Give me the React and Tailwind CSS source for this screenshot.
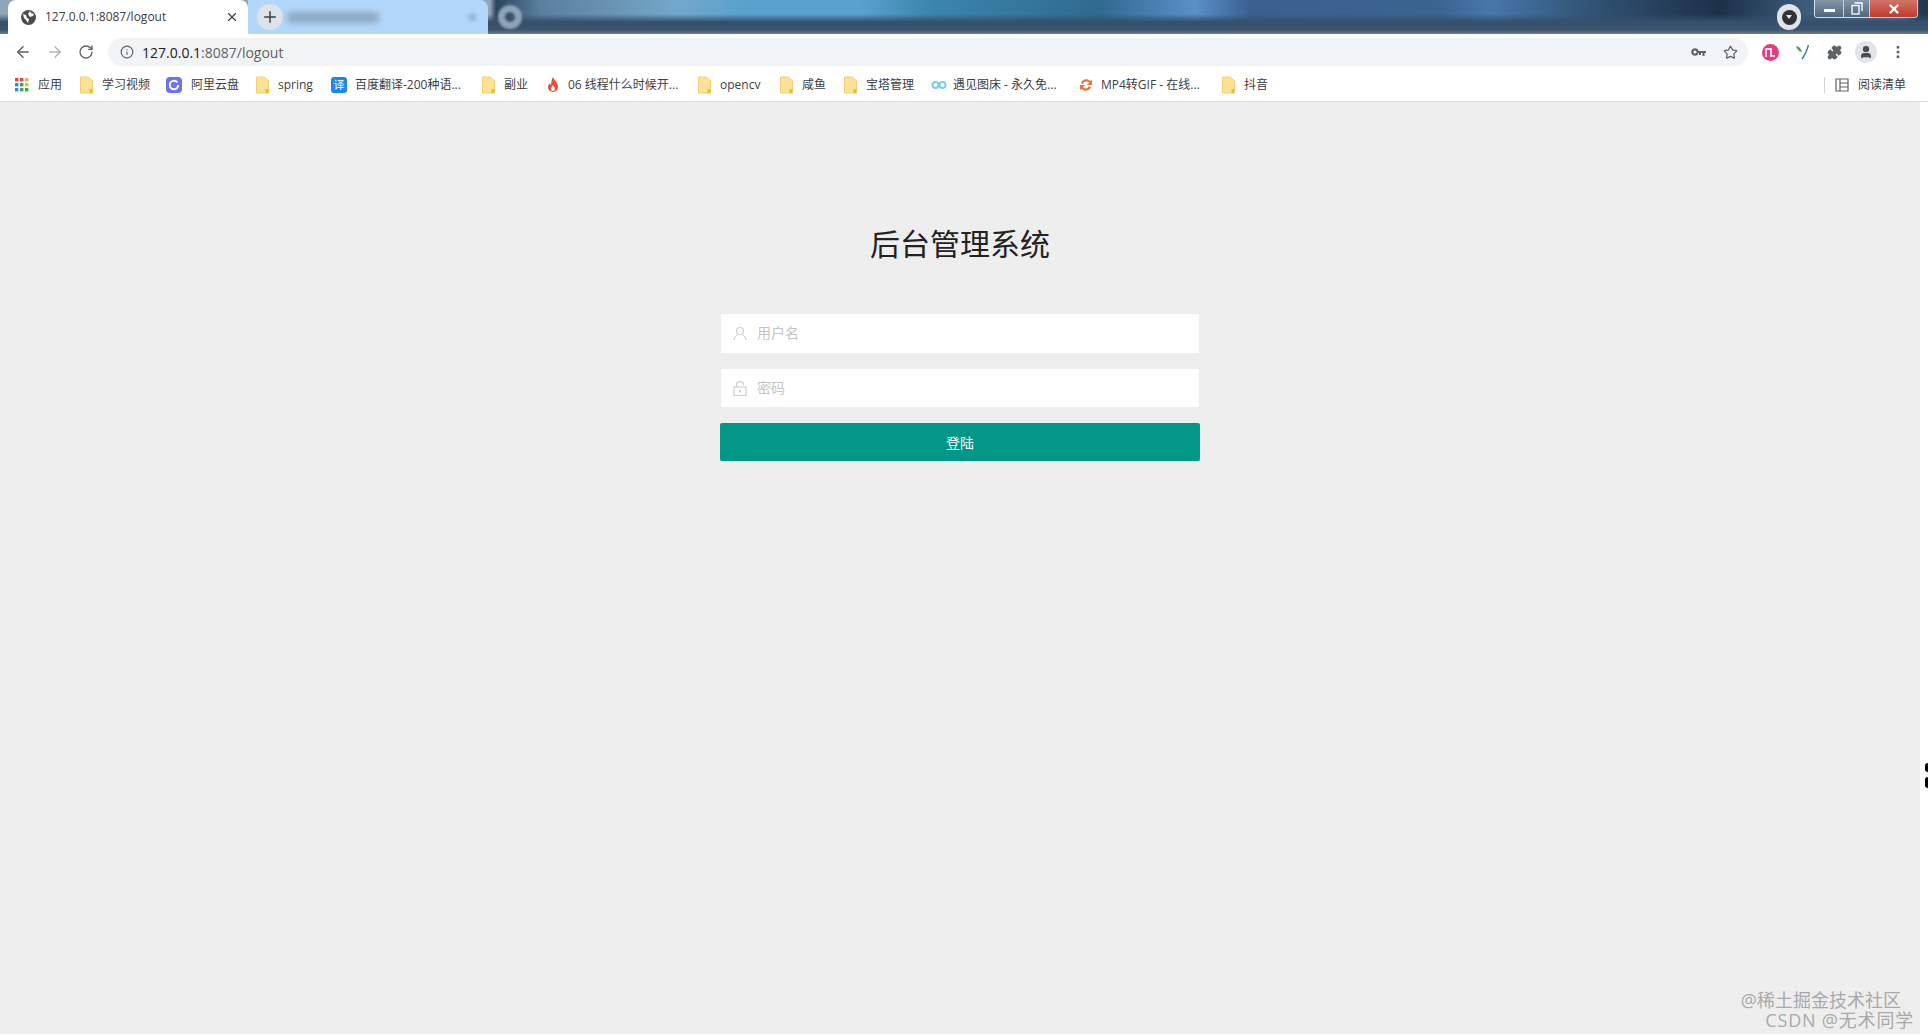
import React from "react";
import { ArrowLeft, ArrowRight, RotateCw, Info, Star, Puzzle, Plus, X, EllipsisVertical, User } from "lucide-react";

const font = { fontFamily: '"Open Sans", "Noto Sans CJK SC", sans-serif' };

const Folder = () => (
  <svg width="13" height="18" viewBox="0 0 13 18" className="shrink-0 mr-[1px]">
    <path d="M.5 1h8l4 4v12H.5z" fill="#fde293" stroke="#f0d070" strokeWidth="1" />
    <path d="M9.500 17v-4h3v4z" fill="#e8bd3e" />
  </svg>
);

const Apps = () => (
  <svg width="14" height="14" viewBox="0 0 14 14" className="shrink-0">
    {[0, 5, 10].map((y, r) =>
      [0, 5, 10].map((x, c) => (
        <rect
          key={x + "-" + y}
          x={x}
          y={y}
          width="3.4"
          height="3.4"
          fill={[["#e8453c", "#e8453c", "#f2b233"], ["#3d82f0", "#3aa757", "#f2b233"], ["#3d82f0", "#3aa757", "#3aa757"]][r][c]}
        />
      ))
    )}
  </svg>
);

const AliIcon = () => (
  <svg width="16" height="16" viewBox="0 0 16 16" className="shrink-0">
    <rect width="16" height="16" rx="4" fill="#6b74ee" />
    <circle cx="8" cy="8" r="4.200" fill="none" stroke="#fff" strokeWidth="2" strokeDasharray="23 3.400" />
  </svg>
);

const FanyiIcon = () => (
  <div className="w-[16px] h-[16px] rounded-[3px] bg-[#1f86ee] text-white text-[11px] leading-[16px] text-center shrink-0">译</div>
);

const Flame = () => (
  <svg width="12" height="16" viewBox="0 0 12 16" className="shrink-0">
    <path d="M6 0c1 3 5 5 5 10a5 5 0 0 1-10 0c0-2 1-3 2-4 0 1 .5 2 1 2 .5-2 0-5 2-8z" fill="#e8503a" />
    <path d="M6 8c.5 1.500 2 2.500 2 4a2 2 0 0 1-4 0c0-1.500 1.500-2.500 2-4z" fill="#fff" />
  </svg>
);

const Infinity2 = () => (
  <svg width="16" height="12" viewBox="0 0 16 12" className="shrink-0">
    <circle cx="4.500" cy="6" r="3" fill="none" stroke="#7ccbf0" strokeWidth="2" />
    <circle cx="11.500" cy="6" r="3" fill="none" stroke="#7ccbf0" strokeWidth="2" />
  </svg>
);

const Sync = () => (
  <svg width="14" height="16" viewBox="0 0 14 16" className="shrink-0">
    <path d="M2 6c1-4 7-5 9-2l2-1v5H8l2-2C9 4 5 4 4 7z" fill="#e8743a" />
    <path d="M12 10c-1 4-7 5-9 2l-2 1V8h5l-2 2c1 2 5 2 6-1z" fill="#e8743a" />
  </svg>
);

const bookmarks = [
  { icon: <Apps />, label: "应用", gap: "gap-[9px]", w: "w-[65px]" },
  { icon: <Folder />, label: "学习视频", gap: "gap-[8px]", w: "w-[86px]" },
  { icon: <AliIcon />, label: "阿里云盘", gap: "gap-[9px]", w: "w-[90px]" },
  { icon: <Folder />, label: "spring", gap: "gap-[8px]", w: "w-[75px]" },
  { icon: <FanyiIcon />, label: "百度翻译-200种语...", gap: "gap-[8px]", w: "w-[151px]" },
  { icon: <Folder />, label: "副业", gap: "gap-[8px]", w: "w-[65px]" },
  { icon: <Flame />, label: "06 线程什么时候开...", gap: "gap-[9px]", w: "w-[151px]" },
  { icon: <Folder />, label: "opencv", gap: "gap-[8px]", w: "w-[82px]" },
  { icon: <Folder />, label: "咸鱼", gap: "gap-[8px]", w: "w-[64px]" },
  { icon: <Folder />, label: "宝塔管理", gap: "gap-[8px]", w: "w-[87px]" },
  { icon: <Infinity2 />, label: "遇见图床 - 永久免...", gap: "gap-[6px]", w: "w-[148px]" },
  { icon: <Sync />, label: "MP4转GIF - 在线...", gap: "gap-[8px]", w: "w-[143px]" },
  { icon: <Folder />, label: "抖音", gap: "gap-[8px]", w: "w-[48px]" },
];

export default function App() {
  return (
    <div className="h-screen w-full overflow-hidden flex flex-col bg-white text-[#3c4043]" style={font}>
      {/* tab strip, blurred desktop wallpaper behind it */}
      <div className="h-[34px] shrink-0 flex bg-[linear-gradient(to_bottom,transparent_0,transparent_14px,#34506c_22px,#3d556e_30px,#6a8094_34px),linear-gradient(to_right,#8fa6ba_0,#8fa6ba_490px,#2b4460_496px,#5a7f9f_540px,#6a93b3_610px,#74a8ca_676px,#5aa2ce_740px,#5aa2ce_860px,#3b86ac_930px,#2f6a90_1100px,#5a8fc8_1195px,#3a6090_1250px,#3c6490_1440px,#4777aa_1490px,#2f5070_1600px,#1d3048_1720px,#3a5a78_1800px,#65798c_1900px,#22384c_1922px)]">
        <div className="w-[8px] shrink-0" />
        <div className="w-[240px] h-[34px] bg-white rounded-t-[8px] flex items-center pl-[13px] pr-[9px] shrink-0">
          <svg width="15" height="15" viewBox="0 0 15 15" className="shrink-0">
            <circle cx="7.500" cy="7.500" r="7.500" fill="#4a4d50" />
            <path d="M2 4l3 1 1 3 2 1-1 4-2-3-2-2zM9 1l1 2 3 1-1 2-3 1-2-3z" fill="#fff" />
          </svg>
          <span className="ml-[9px] text-[12px] text-[#3c4043] flex-1">127.0.0.1:8087/logout</span>
          <X size={14} strokeWidth={2} className="text-[#3c4043]" />
        </div>
        <div className="w-[240px] h-[34px] bg-[#b3d7fb] rounded-tr-[8px] flex items-center pl-[9px] shrink-0">
          <div className="w-[26px] h-[26px] rounded-full bg-[#dde3ea] flex items-center justify-center shrink-0">
            <Plus size={18} strokeWidth={2} className="text-[#3c4043]" />
          </div>
          <div className="ml-[4px] w-[92px] h-[11px] rounded bg-[#8fa7c4] blur-[3px]" />
          <div className="ml-auto mr-[12px] w-[7px] h-[8px] rounded bg-[#92aecb] blur-[2px]" />
        </div>
        <div className="w-[24px] flex items-center justify-center ml-[10px] shrink-0">
          <div className="w-[24px] h-[24px] rounded-full border-[7px] border-[#8fa3b6] blur-[1px]" />
        </div>
        <div className="flex-1" />
        <div className="flex items-start pr-[10px] shrink-0">
          <div className="mt-[4px] mr-[13px] w-[24px] h-[26px] rounded-full bg-[#dfe3ea] flex items-center justify-center">
            <div className="w-[15px] h-[15px] rounded-full bg-[#2f3237] flex items-center justify-center">
              <div className="w-0 h-0 border-l-[3px] border-r-[3px] border-t-[4px] border-l-transparent border-r-transparent border-t-[#e6e6e6]" />
            </div>
          </div>
          <div className="w-[104px] h-[18px] flex rounded-b-[4px] border border-t-0 border-[#d8dfe6] overflow-hidden">
            <div className="w-[29px] bg-[linear-gradient(#8496a8,#4f667f)] flex items-center justify-center border-r border-[#c6d0da]">
              <div className="w-[11px] h-[3px] bg-white mt-[4px]" />
            </div>
            <div className="w-[26px] bg-[linear-gradient(#8496a8,#4f667f)] flex items-center justify-center border-r border-[#c6d0da]">
              <svg width="12" height="13" viewBox="0 0 12 13" fill="none" stroke="#fff" strokeWidth="1.300">
                <rect x="1" y="3.500" width="7" height="8.500" />
                <path d="M3.500 1h7.500v8" />
              </svg>
            </div>
            <div className="flex-1 bg-[linear-gradient(#d1766a,#c1392b)] flex items-center justify-center">
              <X size={14} strokeWidth={4} className="text-white" />
            </div>
          </div>
        </div>
      </div>

      {/* address bar */}
      <div className="h-[34px] pt-[2px] shrink-0 flex items-center pl-[14px] bg-white">
        <ArrowLeft size={18} strokeWidth={2} className="text-[#5f6368]" />
        <ArrowRight size={18} strokeWidth={2} className="ml-[14px] text-[#b3b6ba]" />
        <RotateCw size={16} strokeWidth={2} className="ml-[14px] text-[#5f6368]" />
        <div className="ml-[14px] w-[1640px] h-[28px] rounded-full bg-[#f1f3f4] flex items-center pl-[12px] pr-[10px] shrink-0">
          <Info size={14} strokeWidth={2} className="text-[#5f6368]" />
          <span className="ml-[8px] text-[14px] text-[#202124]">
            127.0.0.1<span className="text-[#5f6368]">:8087/logout</span>
          </span>
          <svg width="15" height="9" viewBox="0 0 15 9" className="ml-auto mr-[17px] shrink-0">
            <circle cx="4" cy="4" r="2.700" fill="none" stroke="#5f6368" strokeWidth="2.200" />
            <path d="M6 3h9v2h-1.500v3h-2V5h-1.500v2h-2V5H6z" fill="#5f6368" />
          </svg>
          <Star size={15} strokeWidth={2} className="text-[#5f6368]" />
        </div>
        <svg width="17" height="17" viewBox="0 0 17 17" className="ml-[14px] shrink-0">
          <circle cx="8.500" cy="8.500" r="8.500" fill="#e23d83" />
          <path d="M4 13V5h5v8M9 12h4" fill="none" stroke="#fff" strokeWidth="1.600" />
        </svg>
        <svg width="13" height="16" viewBox="0 0 13 16" className="ml-[17px] shrink-0">
          <path d="M0 2c3 0 5 3 6 6-3 0-5-3-6-6z" fill="#3f9f7c" />
          <path d="M12.500 1C11 6 9 11 6 15" stroke="#2c7e9c" strokeWidth="1.400" fill="none" />
        </svg>
        <Puzzle size={15} strokeWidth={2} className="ml-[18px] text-[#5f6368] fill-[#5f6368]" />
        <div className="ml-[13px] w-[22px] h-[22px] rounded-full bg-[#e1e4e8] flex items-center justify-center">
          <User size={14} strokeWidth={3} className="text-[#4a4d52] fill-[#4a4d52]" />
        </div>
        <EllipsisVertical size={16} strokeWidth={2.500} className="ml-[13px] text-[#5f6368]" />
      </div>

      {/* bookmarks */}
      <div className="h-[34px] shrink-0 flex items-center pl-[15px] pr-[22px] bg-white border-b border-[#dcdddf] text-[12px] text-[#3c4043]">
        {bookmarks.map((b) => (
          <div key={b.label} className={"flex items-center shrink-0 " + b.gap + " " + b.w}>
            {b.icon}
            <span className="whitespace-nowrap">{b.label}</span>
          </div>
        ))}
        <div className="ml-auto flex items-center">
          <div className="w-px h-[16px] bg-[#d0d2d5] mr-[10px]" />
          <svg width="14" height="14" viewBox="0 0 14 14" className="shrink-0 mr-[9px]">
            <path d="M1 1h12v12H1zM5 1v12M5 5h8M5 9h8" fill="none" stroke="#5f6368" strokeWidth="1.200" />
          </svg>
          <span>阅读清单</span>
        </div>
      </div>

      {/* page */}
      <div className="flex-1 flex min-h-0">
        <div className="flex-1 flex flex-col min-w-0">
          <div className="flex-1 bg-[#eeeeee] flex flex-col items-center relative">
            <h1 className="mt-[124px] h-[36px] text-[30px] leading-[36px] text-[#222222] font-normal">后台管理系统</h1>
            <div className="mt-[52px] w-[480px] flex flex-col">
              <div className="mx-[1px] h-[39px] bg-white flex items-center pl-[12px]">
                <svg width="14" height="15" viewBox="0 0 14 15" fill="none" stroke="#cfcfcf" strokeWidth="1.200">
                  <circle cx="7" cy="5" r="3.500" />
                  <path d="M1 14c.5-3 2-4.500 3.500-5M13 14c-.5-3-2-4.500-3.500-5" />
                </svg>
                <span className="ml-[10px] pb-[2px] text-[14px] text-[#c4c4c4]">用户名</span>
              </div>
              <div className="mx-[1px] mt-[16px] h-[38px] bg-white flex items-center pl-[12px]">
                <svg width="14" height="15" viewBox="0 0 14 15" fill="none" stroke="#cfcfcf" strokeWidth="1.200">
                  <rect x="1" y="6" width="12" height="8.500" />
                  <path d="M3.500 6V4a3.500 3.500 0 0 1 7 0" />
                  <path d="M7 9v2.500" strokeWidth="2" />
                </svg>
                <span className="ml-[10px] pb-[1px] text-[14px] text-[#c4c4c4]">密码</span>
              </div>
              <button className="mt-[16px] h-[38px] bg-[#009688] rounded-[2px] text-white text-[14px]">登陆</button>
            </div>
            {/* csdn watermark */}
            <div className="absolute right-[6px] bottom-[4px] text-[#a9a9a9] text-[18px] leading-[20px] text-right pointer-events-none">
              <div className="pr-[13px]">@稀土掘金技术社区</div>
              <div className="tracking-[0.8px]">CSDN @无术同学</div>
            </div>
          </div>
          <div className="h-[2px] shrink-0 bg-white" />
        </div>
        <div className="w-[8px] shrink-0 bg-white flex flex-col items-end pt-[661px] gap-[5px]">
          <div className="w-[3px] h-[9px] bg-black rounded-l-sm" />
          <div className="w-[3px] h-[11px] bg-black rounded-l-sm" />
        </div>
      </div>
    </div>
  );
}
